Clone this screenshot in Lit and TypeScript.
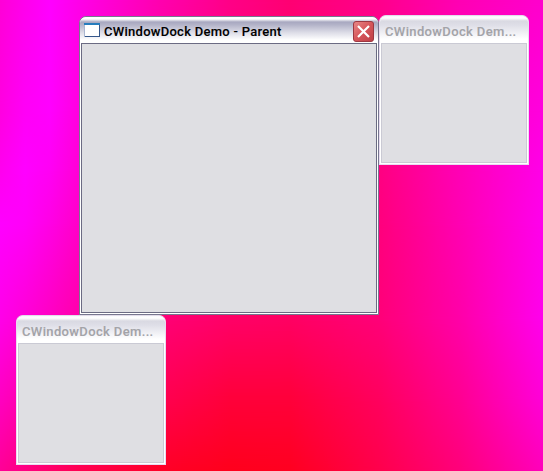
import { LitElement, html, css } from "lit";
import { customElement, property } from "lit/decorators.js";

/** Blue channel of the wallpaper, sampled along horizontal bands. */
const COLUMNS = [0, 25, 50, 80, 160, 230, 290, 380, 460, 543];
const BANDS: { y: number; blue: number[] }[] = [
  { y: 0, blue: [215, 236, 255, 232, 175, 135, 115, 140, 180, 205] },
  { y: 110, blue: [224, 246, 254, 222, 160, 120, 108, 135, 188, 222] },
  { y: 170, blue: [238, 255, 244, 212, 150, 116, 106, 130, 182, 232] },
  { y: 225, blue: [254, 248, 228, 198, 140, 112, 104, 125, 178, 236] },
  { y: 320, blue: [232, 214, 194, 168, 118, 102, 98, 120, 168, 236] },
  { y: 400, blue: [192, 172, 152, 130, 80, 58, 58, 94, 145, 216] },
  { y: 471, blue: [150, 128, 106, 80, 38, 28, 32, 76, 122, 186] },
];

@customElement("dock-window")
export class DockWindow extends LitElement {
  @property() caption = "";
  @property({ type: Boolean, reflect: true }) active = false;

  static styles = css`
    :host {
      box-sizing: border-box;
      display: flex;
      flex-direction: column;
      padding: 0 1px 1px;
      border: 1px solid #e8dcf0;
      border-top-color: #e2dcea;
      border-radius: 7px 7px 0 0;
      background: #fff;
      overflow: hidden;
    }
    :host([active]) {
      border-color: #77778f;
    }
    .bar {
      flex: none;
      height: 27px;
      box-sizing: border-box;
      display: flex;
      align-items: center;
      padding: 4px 3px 0 4px;
      margin: 0 -1px;
      border-radius: 6px 6px 0 0;
      background: linear-gradient(#f8f8fb 0, #fff 2px, #d9d9e2 5px, #dedee7 9px, #eeeef3 16px, #fff 23px);
      font: 500 13px/18px Roboto, "Liberation Sans", sans-serif;
      color: #a3a3a8;
      white-space: nowrap;
    }
    :host([active]) .bar {
      height: 26px;
      padding-top: 2px;
      background: linear-gradient(#fff 0, #fff 2px, #a8a8c0 5px, #b4b4c9 8px, #dadae5 15px, #fff 23px);
      color: #000;
    }
    .caption {
      flex: 1;
      letter-spacing: 0.36px;
      -webkit-text-stroke: 0.1px currentColor;
      padding-left: 1px;
    }
    :host([active]) .caption {
      letter-spacing: 0.27px;
      padding-left: 4px;
      padding-top: 1px;
    }
    .icon {
      width: 16px;
      height: 14px;
      margin-top: -3px;
    }
    .close {
      width: 21px;
      height: 21px;
      margin-right: 1px;
    }
    .client {
      flex: 1;
      border: 1px solid #cacad4;
      background: #dfdfe3;
    }
    :host([active]) .client {
      border-color: #6b6b83;
    }
  `;

  render() {
    return html`
      <div class="bar">
        ${this.active
          ? html`<svg class="icon" viewBox="0 0 16 14">
              <path d="M0 0h16v14H0z" fill="#a9b6d0" />
              <path d="M15 1h1v13H1v-1h14z" fill="#36588b" />
              <path d="M1 2h14v11H1z" fill="#fff" />
              <path d="M0 0h16v2H0z" fill="#267dbd" />
            </svg>`
          : ""}
        <span class="caption">${this.caption}</span>
        ${this.active
          ? html`<svg class="close" viewBox="0 0 21 21">
              <defs>
                <linearGradient id="red" x2="1" y2="1">
                  <stop stop-color="#e98a89" />
                  <stop offset=".5" stop-color="#d6555a" />
                  <stop offset="1" stop-color="#bd3f47" />
                </linearGradient>
              </defs>
              <rect x=".5" y=".5" width="20" height="20" rx="2.5" fill="url(#red)" stroke="#9c3842" />
              <path d="M5 5l11 11m0-11l-11 11" stroke="#fff" stroke-width="2.2" />
            </svg>`
          : ""}
      </div>
      <div class="client"></div>
    `;
  }
}

@customElement("app-root")
export class AppRoot extends LitElement {
  static styles = css`
    :host {
      display: block;
      position: relative;
      width: 543px;
      height: 471px;
      overflow: hidden;
    }
    .band,
    dock-window {
      position: absolute;
    }
    .band {
      inset: 0;
    }
    .right {
      left: 379px;
      top: 15px;
      width: 150px;
      height: 150px;
    }
    .lower {
      left: 16px;
      top: 315px;
      width: 150px;
      height: 150px;
    }
    .parent {
      left: 79px;
      top: 16px;
      width: 300px;
      height: 299px;
    }
  `;

  render() {
    return html`
      ${BANDS.map((band, i) => {
        const stops = band.blue.map((b, c) => `rgb(255 0 ${b}) ${COLUMNS[c]}px`).join(",");
        const mask = i ? `mask-image:linear-gradient(transparent ${BANDS[i - 1].y}px,#000 ${band.y}px)` : "";
        return html`<div class="band" style="background:linear-gradient(90deg,${stops});${mask}"></div>`;
      })}
      <dock-window class="right" caption="CWindowDock Dem..."></dock-window>
      <dock-window class="lower" caption="CWindowDock Dem..."></dock-window>
      <dock-window class="parent" caption="CWindowDock Demo - Parent" active></dock-window>
    `;
  }
}
